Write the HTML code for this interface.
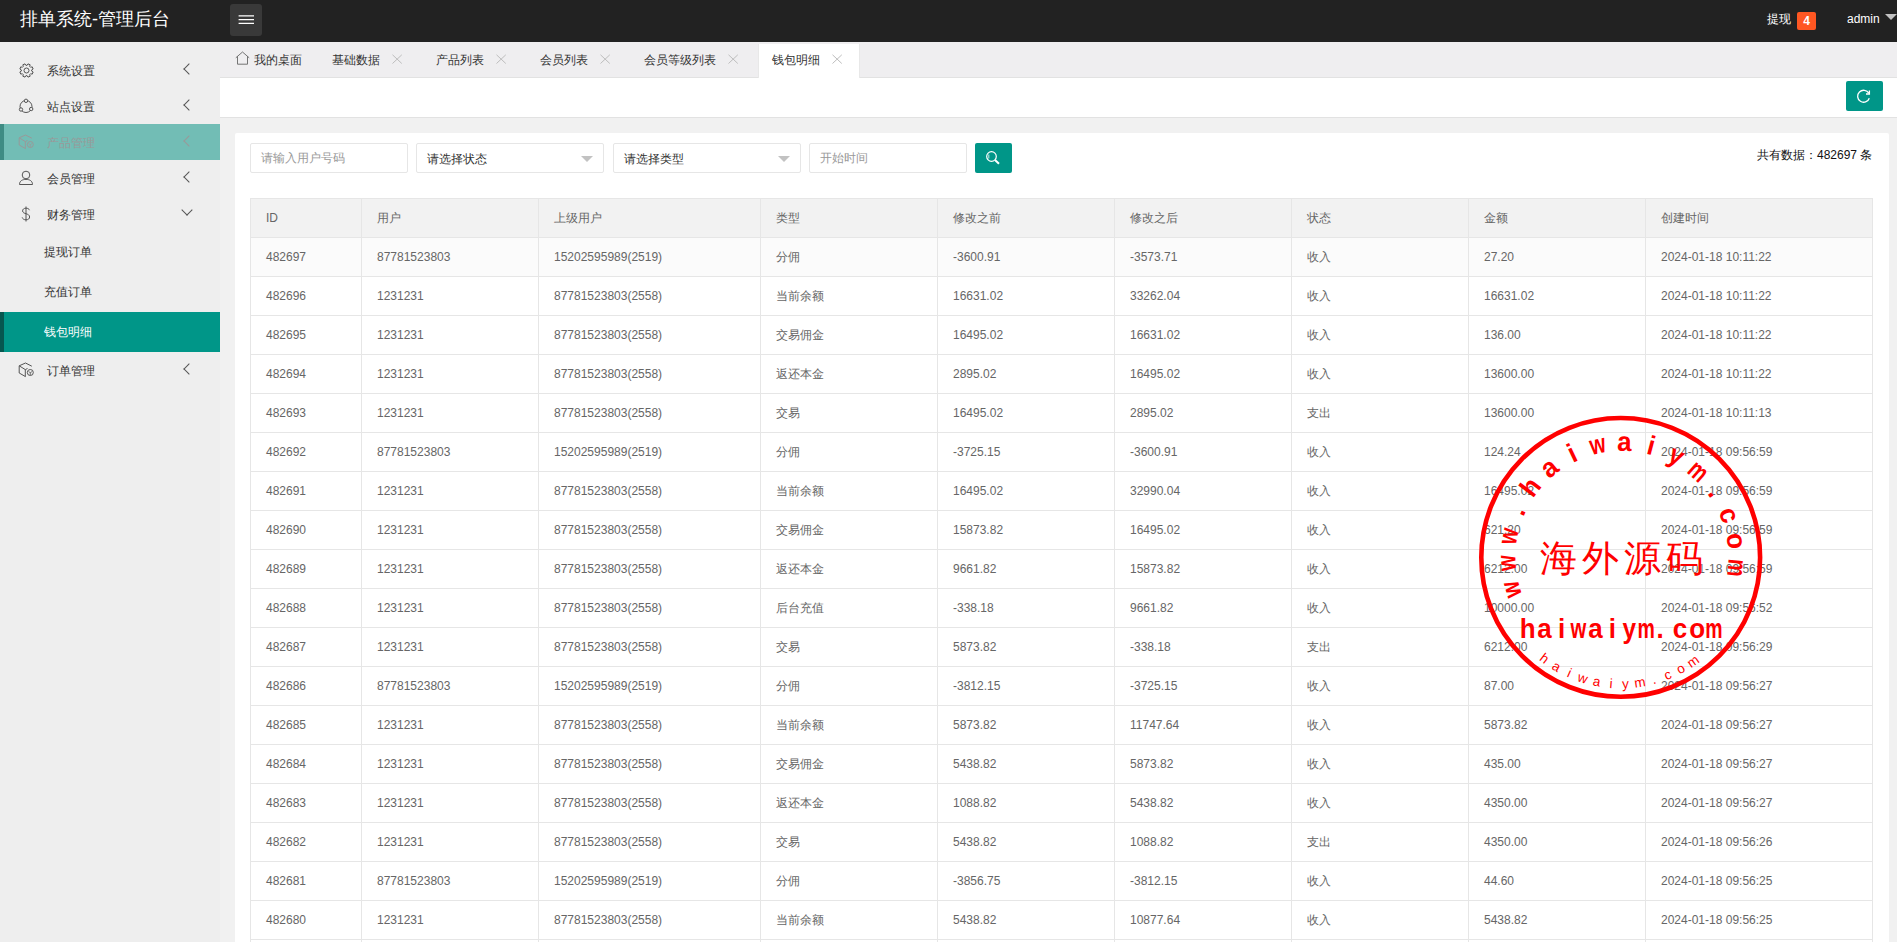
<!DOCTYPE html>
<html><head><meta charset="utf-8">
<style>
*{margin:0;padding:0;box-sizing:border-box}
html,body{width:1897px;height:942px;overflow:hidden;background:#f1f1f1;font-family:"Liberation Sans",sans-serif;color:#333}
.abs{position:absolute}
#hdr{position:absolute;left:0;top:0;width:1897px;height:42px;background:#222}
#logo{position:absolute;left:20px;top:7px;font-size:18px;color:#fff;line-height:24px;white-space:nowrap}
#ham{position:absolute;left:230px;top:4px;width:32px;height:32px;background:#393939;border-radius:3px}
#side{position:absolute;left:0;top:42px;width:220px;height:900px;background:#eee}
.mi{position:absolute;left:0;width:220px;height:36px;font-size:12px;color:#333;line-height:36px}
.mi .t{position:absolute;left:47px;top:1px}
.mi .s{position:absolute;left:44px;top:0}
#tabs{position:absolute;left:220px;top:42px;width:1677px;height:36px;background:#efeef0}
.tab{position:absolute;top:0;height:36px;line-height:36px;font-size:12px;color:#333;white-space:nowrap}
#bar{position:absolute;left:220px;top:78px;width:1677px;height:40px;background:#fff;border-bottom:1px solid #e2e2e2}
#card{position:absolute;left:235px;top:133px;width:1654px;height:820px;background:#fff;border-radius:2px}
.inp{position:absolute;top:143px;height:30px;border:1px solid #e6e6e6;border-radius:2px;background:#fff;font-size:12px;line-height:28px;padding-left:10px;color:#999;white-space:nowrap}
table{position:absolute;left:250px;top:198px;border-collapse:collapse;table-layout:fixed;font-size:12px;color:#666}
td,th{border:1px solid #e6e6e6;height:39px;padding:0 15px;text-align:left;font-weight:normal;white-space:nowrap;overflow:hidden}
th{background:#f2f2f2}
tr.r1 td{background:#fbfbfb}

.ic{position:absolute}
.chl{position:absolute;left:185px;top:13px;width:8px;height:8px;border-left:1px solid #555;border-bottom:1px solid #555;transform:rotate(45deg)}
.chd{position:absolute;left:183px;top:10px;width:8px;height:8px;border-left:1px solid #555;border-bottom:1px solid #555;transform:rotate(-45deg)}
.hov{background:#72bdb5;color:#999}
.hov:before{content:"";position:absolute;left:0;top:0;width:4px;height:36px;background:#3f8c84}
.hov .chl{border-color:#999}
.act{background:#009688;color:#fff}
.act:before{content:"";position:absolute;left:0;top:0;width:4px;height:40px;background:#06574f}

.x{position:absolute;top:12px;width:11px;height:10px}
.atab{position:absolute;left:538px;top:2px;width:102px;height:34px;background:#fff;border-left:1px solid #e8e8e8;border-right:1px solid #e8e8e8}
#tabs{border-bottom:1px solid #e2e2e2}
.tri{position:absolute;right:10px;top:12px;width:0;height:0;border-left:6px solid transparent;border-right:6px solid transparent;border-top:6px solid #c2c2c2}
</style></head><body>
<div id="hdr">
  <div id="logo">排单系统-管理后台</div>
  <div id="ham"><svg width="32" height="32" viewBox="0 0 32 32" style="position:absolute;left:0;top:0"><path d="M8.6 11.8h15.4M8.6 15.6h15.4M8.6 19.4h15.4" stroke="#fff" stroke-width="1.25"/></svg></div>
  <div class="abs" style="left:1767px;top:11px;font-size:12px;color:#fff;line-height:16px">提现</div>
  <div class="abs" style="left:1797px;top:12px;width:19px;height:18px;background:#ff5722;border-radius:2px;color:#fff;font-size:12px;font-weight:bold;line-height:18px;text-align:center">4</div>
  <div class="abs" style="left:1847px;top:11px;font-size:12px;color:#fff;line-height:16px">admin</div>
  <div class="abs" style="left:1885px;top:14px;width:0;height:0;border-left:6px solid transparent;border-right:6px solid transparent;border-top:6px solid #c2c2c2"></div>
</div>
<div id="side">
  <div class="mi" style="top:10px"><svg class="ic" width="17" height="17" viewBox="0 0 17 17" style="left:17.5px;top:9.5px"><path d="M9.09 3.33 L9.97 1.86 L12.15 2.76 L11.74 4.43 L12.57 5.26 L14.24 4.85 L15.14 7.03 L13.67 7.91 L13.67 9.09 L15.14 9.97 L14.24 12.15 L12.57 11.74 L11.74 12.57 L12.15 14.24 L9.97 15.14 L9.09 13.67 L7.91 13.67 L7.03 15.14 L4.85 14.24 L5.26 12.57 L4.43 11.74 L2.76 12.15 L1.86 9.97 L3.33 9.09 L3.33 7.91 L1.86 7.03 L2.76 4.85 L4.43 5.26 L5.26 4.43 L4.85 2.76 L7.03 1.86 L7.91 3.33z" fill="none" stroke="#555" stroke-width="1" stroke-linejoin="round"/><circle cx="8.5" cy="8.5" r="2.5" fill="none" stroke="#555" stroke-width="1"/></svg><span class="t">系统设置</span><span class="chl"></span></div>
  <div class="mi" style="top:46px"><svg class="ic" width="16" height="16" viewBox="0 0 16 16" style="left:18px;top:10px"><circle cx="8" cy="8.5" r="6" fill="none" stroke="#555" stroke-width="1"/><circle cx="8" cy="2.8" r="1.7" fill="#eee" stroke="#555" stroke-width="1"/><circle cx="3" cy="11.5" r="1.7" fill="#eee" stroke="#555" stroke-width="1"/><circle cx="13.2" cy="11" r="1.7" fill="#eee" stroke="#555" stroke-width="1"/></svg><span class="t">站点设置</span><span class="chl"></span></div>
  <div class="mi hov" style="top:82px"><svg class="ic" width="16" height="16" viewBox="0 0 16 16" style="left:18px;top:10px"><path d="M7.5 1L13.8 4.2 M1.2 3.8L7.5 1 M1.2 3.8V11L7.5 14.6 M1.2 3.8L7.3 7.6V14.6 M7.3 7.6L9.5 6.5" fill="none" stroke="#999" stroke-width="1"/><circle cx="12.3" cy="10.5" r="3" fill="#72bdb5" stroke="#999" stroke-width="1"/><path d="M10.5 9.6L12.3 10.6 14.1 9.6M12.3 10.6V13" fill="none" stroke="#999" stroke-width=".8"/></svg><span class="t">产品管理</span><span class="chl"></span></div>
  <div class="mi" style="top:118px"><svg class="ic" width="16" height="16" viewBox="0 0 16 16" style="left:18px;top:10px"><circle cx="8" cy="5" r="3.8" fill="none" stroke="#555" stroke-width="1"/><path d="M1.5 14.5C1.5 10.8 4.5 9.4 8 9.4S14.5 10.8 14.5 14.5z" fill="none" stroke="#555" stroke-width="1"/></svg><span class="t">会员管理</span><span class="chl"></span></div>
  <div class="mi" style="top:154px"><svg class="ic" width="16" height="16" viewBox="0 0 16 16" style="left:18px;top:10px"><path d="M11.5 4.2C11 2.8 9.8 2.2 8 2.2 5.9 2.2 4.6 3.3 4.6 4.9c0 3.6 7 2 7 6.1 0 1.7-1.4 2.8-3.6 2.8-2 0-3.3-.8-3.8-2.4M8 .5v15" fill="none" stroke="#555" stroke-width="1"/></svg><span class="t">财务管理</span><span class="chd"></span></div>
  <div class="mi" style="top:190px;height:40px;line-height:40px"><span class="s">提现订单</span></div>
  <div class="mi" style="top:230px;height:40px;line-height:40px"><span class="s">充值订单</span></div>
  <div class="mi act" style="top:270px;height:40px;line-height:40px"><span class="s">钱包明细</span></div>
  <div class="mi" style="top:310px"><svg class="ic" width="16" height="16" viewBox="0 0 16 16" style="left:18px;top:10px"><path d="M7.5 1L13.8 4.2 M1.2 3.8L7.5 1 M1.2 3.8V11L7.5 14.6 M1.2 3.8L7.3 7.6V14.6 M7.3 7.6L9.5 6.5" fill="none" stroke="#555" stroke-width="1"/><circle cx="12.3" cy="10.5" r="3" fill="#eee" stroke="#555" stroke-width="1"/><path d="M10.5 9.6L12.3 10.6 14.1 9.6M12.3 10.6V13" fill="none" stroke="#555" stroke-width=".8"/></svg><span class="t">订单管理</span><span class="chl"></span></div>
</div>
<div id="tabs">
  <svg class="abs" style="left:15px;top:9px" width="15" height="14" viewBox="0 0 15 14"><path d="M.8 6.8L7.5 1 14.2 6.8M2.5 5.3V13.2H12.5V5.3" fill="none" stroke="#666" stroke-width=".9"/></svg>
  <div class="tab" style="left:34px">我的桌面</div>
  <div class="tab" style="left:112px">基础数据</div><svg class="x" style="left:172px" width="11" height="10" viewBox="0 0 11 10"><path d="M.5 .8L9.8 9.5M9.8 .8L.5 9.5" stroke="#bdbdbd" stroke-width="1"/></svg>
  <div class="tab" style="left:216px">产品列表</div><svg class="x" style="left:276px" width="11" height="10" viewBox="0 0 11 10"><path d="M.5 .8L9.8 9.5M9.8 .8L.5 9.5" stroke="#bdbdbd" stroke-width="1"/></svg>
  <div class="tab" style="left:320px">会员列表</div><svg class="x" style="left:380px" width="11" height="10" viewBox="0 0 11 10"><path d="M.5 .8L9.8 9.5M9.8 .8L.5 9.5" stroke="#bdbdbd" stroke-width="1"/></svg>
  <div class="tab" style="left:424px">会员等级列表</div><svg class="x" style="left:508px" width="11" height="10" viewBox="0 0 11 10"><path d="M.5 .8L9.8 9.5M9.8 .8L.5 9.5" stroke="#bdbdbd" stroke-width="1"/></svg>
  <div class="atab"></div>
  <div class="tab" style="left:552px">钱包明细</div><svg class="x" style="left:612px" width="11" height="10" viewBox="0 0 11 10"><path d="M.5 .8L9.8 9.5M9.8 .8L.5 9.5" stroke="#bdbdbd" stroke-width="1"/></svg>
</div>
<div id="bar"><div class="abs" style="left:1626px;top:3px;width:37px;height:30px;background:#009688;border-radius:2px"><svg width="37" height="30" viewBox="0 0 37 30" style="position:absolute;left:0;top:0"><path d="M22.8 12.2A6 6 0 1 0 23.3 17.2" fill="none" stroke="#fff" stroke-width="1.3"/><path d="M20 13H23.4V9.4" fill="none" stroke="#fff" stroke-width="1.3"/></svg></div></div>
<div id="card"></div>
<div class="inp" style="left:250px;width:158px">请输入用户号码</div>
<div class="inp" style="left:416px;width:188px;color:#333;padding-top:1px">请选择状态<span class="tri"></span></div>
<div class="inp" style="left:613px;width:188px;color:#333;padding-top:1px">请选择类型<span class="tri"></span></div>
<div class="inp" style="left:809px;width:158px">开始时间</div>
<div class="abs" style="left:975px;top:143px;width:37px;height:30px;background:#009688;border-radius:2px"><svg width="37" height="30" viewBox="0 0 37 30" style="position:absolute;left:0;top:0"><circle cx="16.5" cy="13.5" r="4.8" fill="none" stroke="#fff" stroke-width="1.2"/><path d="M20 17L24 20.8" stroke="#fff" stroke-width="2"/><path d="M13.8 11.5v4" stroke="#fff" stroke-width="0.8"/></svg></div>
<div class="abs" style="left:1757px;top:147px;font-size:12px;color:#111;white-space:nowrap">共有数据：482697 条</div>
<table id="tbl">
<colgroup><col style="width:111px"><col style="width:177px"><col style="width:222px"><col style="width:177px"><col style="width:177px"><col style="width:177px"><col style="width:177px"><col style="width:177px"><col style="width:227px"></colgroup>
<tr><th>ID</th><th>用户</th><th>上级用户</th><th>类型</th><th>修改之前</th><th>修改之后</th><th>状态</th><th>金额</th><th>创建时间</th></tr>
<tr class="r1"><td>482697</td><td>87781523803</td><td>15202595989(2519)</td><td>分佣</td><td>-3600.91</td><td>-3573.71</td><td>收入</td><td>27.20</td><td>2024-01-18 10:11:22</td></tr>
<tr><td>482696</td><td>1231231</td><td>87781523803(2558)</td><td>当前余额</td><td>16631.02</td><td>33262.04</td><td>收入</td><td>16631.02</td><td>2024-01-18 10:11:22</td></tr>
<tr><td>482695</td><td>1231231</td><td>87781523803(2558)</td><td>交易佣金</td><td>16495.02</td><td>16631.02</td><td>收入</td><td>136.00</td><td>2024-01-18 10:11:22</td></tr>
<tr><td>482694</td><td>1231231</td><td>87781523803(2558)</td><td>返还本金</td><td>2895.02</td><td>16495.02</td><td>收入</td><td>13600.00</td><td>2024-01-18 10:11:22</td></tr>
<tr><td>482693</td><td>1231231</td><td>87781523803(2558)</td><td>交易</td><td>16495.02</td><td>2895.02</td><td>支出</td><td>13600.00</td><td>2024-01-18 10:11:13</td></tr>
<tr><td>482692</td><td>87781523803</td><td>15202595989(2519)</td><td>分佣</td><td>-3725.15</td><td>-3600.91</td><td>收入</td><td>124.24</td><td>2024-01-18 09:56:59</td></tr>
<tr><td>482691</td><td>1231231</td><td>87781523803(2558)</td><td>当前余额</td><td>16495.02</td><td>32990.04</td><td>收入</td><td>16495.02</td><td>2024-01-18 09:56:59</td></tr>
<tr><td>482690</td><td>1231231</td><td>87781523803(2558)</td><td>交易佣金</td><td>15873.82</td><td>16495.02</td><td>收入</td><td>621.20</td><td>2024-01-18 09:56:59</td></tr>
<tr><td>482689</td><td>1231231</td><td>87781523803(2558)</td><td>返还本金</td><td>9661.82</td><td>15873.82</td><td>收入</td><td>6212.00</td><td>2024-01-18 09:56:59</td></tr>
<tr><td>482688</td><td>1231231</td><td>87781523803(2558)</td><td>后台充值</td><td>-338.18</td><td>9661.82</td><td>收入</td><td>10000.00</td><td>2024-01-18 09:56:52</td></tr>
<tr><td>482687</td><td>1231231</td><td>87781523803(2558)</td><td>交易</td><td>5873.82</td><td>-338.18</td><td>支出</td><td>6212.00</td><td>2024-01-18 09:56:29</td></tr>
<tr><td>482686</td><td>87781523803</td><td>15202595989(2519)</td><td>分佣</td><td>-3812.15</td><td>-3725.15</td><td>收入</td><td>87.00</td><td>2024-01-18 09:56:27</td></tr>
<tr><td>482685</td><td>1231231</td><td>87781523803(2558)</td><td>当前余额</td><td>5873.82</td><td>11747.64</td><td>收入</td><td>5873.82</td><td>2024-01-18 09:56:27</td></tr>
<tr><td>482684</td><td>1231231</td><td>87781523803(2558)</td><td>交易佣金</td><td>5438.82</td><td>5873.82</td><td>收入</td><td>435.00</td><td>2024-01-18 09:56:27</td></tr>
<tr><td>482683</td><td>1231231</td><td>87781523803(2558)</td><td>返还本金</td><td>1088.82</td><td>5438.82</td><td>收入</td><td>4350.00</td><td>2024-01-18 09:56:27</td></tr>
<tr><td>482682</td><td>1231231</td><td>87781523803(2558)</td><td>交易</td><td>5438.82</td><td>1088.82</td><td>支出</td><td>4350.00</td><td>2024-01-18 09:56:26</td></tr>
<tr><td>482681</td><td>87781523803</td><td>15202595989(2519)</td><td>分佣</td><td>-3856.75</td><td>-3812.15</td><td>收入</td><td>44.60</td><td>2024-01-18 09:56:25</td></tr>
<tr><td>482680</td><td>1231231</td><td>87781523803(2558)</td><td>当前余额</td><td>5438.82</td><td>10877.64</td><td>收入</td><td>5438.82</td><td>2024-01-18 09:56:25</td></tr>
<tr><td>482679</td><td>1231231</td><td>87781523803(2558)</td><td>交易佣金</td><td>5000.00</td><td>5438.82</td><td>收入</td><td>438.82</td><td>2024-01-18 09:56:25</td></tr>
</table>
<!--STAMP--><svg class="abs" style="left:0;top:0;pointer-events:none" width="1897" height="942" viewBox="0 0 1897 942">
<circle cx="1620.7" cy="557.4" r="139.4" fill="none" stroke="#f00" stroke-width="4.6"/>
<g fill="#f00" font-family="Liberation Sans" font-weight="bold" font-size="26" text-anchor="middle"><text x="0" y="0" transform="rotate(-106.22 1622.0 557.4) translate(1622.0 450.9) scale(0.78 1.04)">w</text><text x="0" y="0" transform="rotate(-92.80 1622.0 557.4) translate(1622.0 450.9) scale(0.78 1.04)">w</text><text x="0" y="0" transform="rotate(-79.36 1622.0 557.4) translate(1622.0 450.9) scale(0.78 1.04)">w</text><text x="0" y="0" transform="rotate(-65.94 1622.0 557.4) translate(1622.0 450.9) scale(1.0 1.04)">.</text><text x="0" y="0" transform="rotate(-52.50 1622.0 557.4) translate(1622.0 450.9) scale(1.0 1.04)">h</text><text x="0" y="0" transform="rotate(-39.08 1622.0 557.4) translate(1622.0 450.9) scale(1.0 1.04)">a</text><text x="0" y="0" transform="rotate(-25.64 1622.0 557.4) translate(1622.0 450.9) scale(1.0 1.04)">i</text><text x="0" y="0" transform="rotate(-12.21 1622.0 557.4) translate(1622.0 450.9) scale(0.78 1.04)">w</text><text x="0" y="0" transform="rotate(1.21 1622.0 557.4) translate(1622.0 450.9) scale(1.0 1.04)">a</text><text x="0" y="0" transform="rotate(14.64 1622.0 557.4) translate(1622.0 450.9) scale(1.0 1.04)">i</text><text x="0" y="0" transform="rotate(28.08 1622.0 557.4) translate(1622.0 450.9) scale(0.94 1.04)">y</text><text x="0" y="0" transform="rotate(41.50 1622.0 557.4) translate(1622.0 450.9) scale(0.75 1.04)">m</text><text x="0" y="0" transform="rotate(54.94 1622.0 557.4) translate(1622.0 450.9) scale(1.0 1.04)">.</text><text x="0" y="0" transform="rotate(68.36 1622.0 557.4) translate(1622.0 450.9) scale(1.0 1.04)">c</text><text x="0" y="0" transform="rotate(81.80 1622.0 557.4) translate(1622.0 450.9) scale(1.0 1.04)">o</text><text x="0" y="0" transform="rotate(95.22 1622.0 557.4) translate(1622.0 450.9) scale(0.75 1.04)">m</text></g>
<g fill="#f00" font-family="Liberation Sans" font-size="13.5" text-anchor="middle"><text x="1620.7" y="688.4" transform="rotate(37.00 1620.7 557.4)">h</text><text x="1620.7" y="688.4" transform="rotate(30.47 1620.7 557.4)">a</text><text x="1620.7" y="688.4" transform="rotate(23.94 1620.7 557.4)">i</text><text x="1620.7" y="688.4" transform="rotate(17.41 1620.7 557.4)">w</text><text x="1620.7" y="688.4" transform="rotate(10.88 1620.7 557.4)">a</text><text x="1620.7" y="688.4" transform="rotate(4.35 1620.7 557.4)">i</text><text x="1620.7" y="688.4" transform="rotate(-2.18 1620.7 557.4)">y</text><text x="1620.7" y="688.4" transform="rotate(-8.71 1620.7 557.4)">m</text><text x="1620.7" y="688.4" transform="rotate(-15.24 1620.7 557.4)">.</text><text x="1620.7" y="688.4" transform="rotate(-21.77 1620.7 557.4)">c</text><text x="1620.7" y="688.4" transform="rotate(-28.30 1620.7 557.4)">o</text><text x="1620.7" y="688.4" transform="rotate(-34.83 1620.7 557.4)">m</text></g>
<g fill="#f00" font-family="Liberation Sans" font-weight="bold" font-size="26" text-anchor="middle"><text x="0" y="0" transform="translate(1527.6 638.4) scale(1.0 1.04)">h</text><text x="0" y="0" transform="translate(1544.5 638.4) scale(1.0 1.04)">a</text><text x="0" y="0" transform="translate(1561.5 638.4) scale(1.0 1.04)">i</text><text x="0" y="0" transform="translate(1578.4 638.4) scale(0.78 1.04)">w</text><text x="0" y="0" transform="translate(1595.4 638.4) scale(1.0 1.04)">a</text><text x="0" y="0" transform="translate(1612.3 638.4) scale(1.0 1.04)">i</text><text x="0" y="0" transform="translate(1629.3 638.4) scale(0.94 1.04)">y</text><text x="0" y="0" transform="translate(1646.2 638.4) scale(0.75 1.04)">m</text><text x="0" y="0" transform="translate(1660.2 638.4) scale(1.0 1.04)">.</text><text x="0" y="0" transform="translate(1680.1 638.4) scale(1.0 1.04)">c</text><text x="0" y="0" transform="translate(1697.1 638.4) scale(1.0 1.04)">o</text><text x="0" y="0" transform="translate(1714.0 638.4) scale(0.75 1.04)">m</text></g>
<text x="1624" y="570.5" fill="#f00" font-family="Liberation Serif" font-size="37" letter-spacing="5" text-anchor="middle">海外源码</text>
</svg>
<!--/STAMP-->
</body></html>
